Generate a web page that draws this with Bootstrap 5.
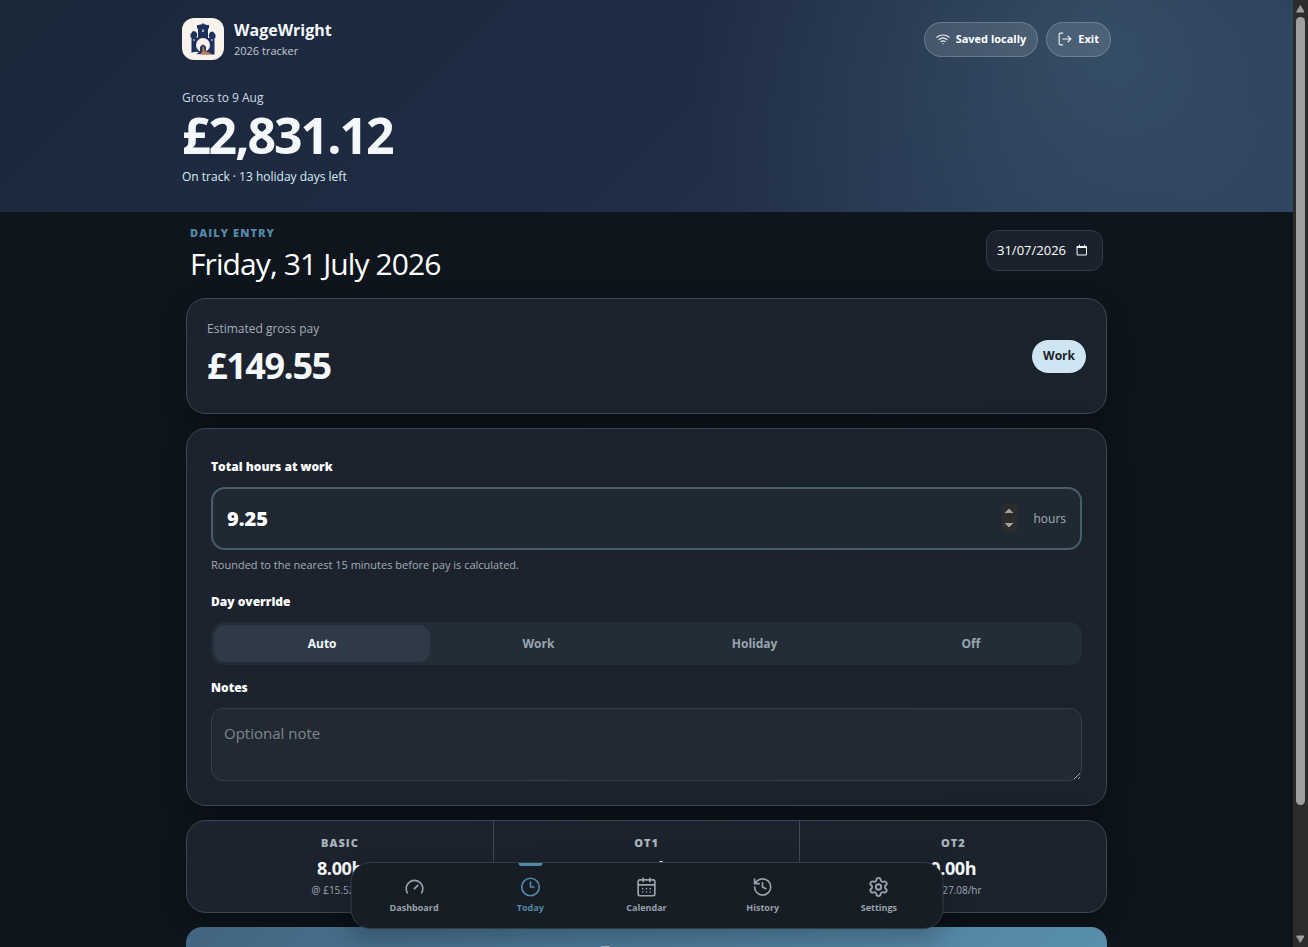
<!DOCTYPE html>
<html lang="en-GB" data-bs-theme="dark">
<head>
<meta charset="utf-8">
<meta name="viewport" content="width=device-width, initial-scale=1">
<title>WageWright</title>
<link href="https://cdn.jsdelivr.net/npm/bootstrap@5.3.0/dist/css/bootstrap.min.css" rel="stylesheet">
<style>
  :root { color-scheme: dark; }
  body { font-family: "Open Sans", "Noto Sans", sans-serif; background: #0e151c; color: #f4f8fb; font-size: 16px; }
  svg { flex: none; fill: none; stroke: currentColor; stroke-width: 2; stroke-linecap: round; stroke-linejoin: round; }
  .hero { background:
      radial-gradient(circle at 85% 20%, rgba(84,130,144,.32), transparent 410px),
      linear-gradient(135deg, #1b283a 0%, #1f2b44 50%, #2b3c5a 100%);
    padding: 18px 0 26px; }
  .hero-inner { max-width: 961px; padding: 0 16px; }
  .brand { gap: 10px; }
  .brand-mark { width: 42px; height: 42px; border-radius: 12px; stroke: none; }
  .brand-name { font-size: 16px; line-height: 24px; font-weight: 700; }
  .brand-sub { font-size: 11px; line-height: 18px; color: #c3cdd8; }
  .pill { border: 1px solid rgba(255,255,255,.2); background: rgba(255,255,255,.12); border-radius: 99px; color: #fff; font-size: 11px; font-weight: 700; line-height: 18px; height: 35px; gap: 6px; padding: 0 11px; }
  .pill svg { opacity: .9; }
  .gross-label { font-size: 12px; line-height: 18px; color: #d0d9e3; margin-top: 29px; }
  .gross-sum { font-size: 50px; line-height: 56px; font-weight: 700; letter-spacing: -.04em; }
  .gross-note { font-size: 12px; line-height: 18px; color: #d8eef5; margin-top: 5px; }
  .sheet { max-width: 921px; padding-top: 12px; }
  .eyebrow { color: #5488a8; font-size: 11px; line-height: 18px; font-weight: 800; letter-spacing: .1em; }
  .day-title { font-size: 30px; line-height: 44px; font-weight: 400; letter-spacing: -.03em; }
  .date-box { width: 117px; height: 41px; background: #1b222d; border: 1px solid #303945; border-radius: 12px; padding: 0 10px; margin-top: 6px; }
  .date-box input { background: none; border: 0; outline: 0; color: #fff; font-size: 13px; width: 76px; padding: 0; }
  .panel { background: linear-gradient(135deg, #1c232e, #1a222c); border: 1px solid #3d4853; border-radius: 20px; box-shadow: 0 8px 28px rgba(0,0,0,.32); margin-bottom: 14px; }
  .pay { padding: 20px; margin-top: 12px; }
  .pay-label { font-size: 12px; line-height: 20px; color: #a4adb7; }
  .pay-sum { font-size: 36px; line-height: 54px; font-weight: 700; letter-spacing: -.04em; }
  .work-tag { background: #cfe5f1; color: #17212b; font-size: 12px; line-height: 18px; font-weight: 700; padding: 7px 11px 8px; border-radius: 99px; }
  .field-label { font-size: 12px; line-height: 28px; font-weight: 800; color: #fff; display: block; margin-bottom: 6px; }
  .hours-box { border: 2px solid #485c69; background: #1f2933; border-radius: 14px; height: 63px; padding: 0 14px; }
  .hours-box input { background: none; border: 0; outline: 0; color: #fff; font-size: 20px; font-weight: 800; min-width: 0; padding: 0; height: 30px; }
  .hours-box input::-webkit-inner-spin-button { opacity: 1; height: 28px; }
  .hours-unit { font-size: 12px; color: #a4adb7; }
  .hint { font-size: 11px; line-height: 18px; color: #a4adb7; margin: 6px 0 14px; }
  .segment { background: #222d38; border-radius: 13px; padding: 3px; margin-bottom: 9px; }
  .segment label { font-size: 12px; line-height: 18px; font-weight: 700; color: #9ba5af; height: 37px; padding: 10px; border: 0; border-radius: 11px; flex: 1 1 0; }
  .segment .btn-check:checked + label { background: #2e3a47; color: #f4f8fb; }
  .notes { background: #212a33; border: 1px solid #343e48; border-radius: 12px; height: 73px; padding: 12px; font-size: 15px; line-height: 24px; color: #fff; resize: vertical; outline: 0; display: block; }
  .notes::placeholder { color: #7e868d; opacity: 1; }
  .rate { padding: 13px 0 16px; }
  .rate + .rate { border-left: 1px solid #3d4853; }
  .rate-name { font-size: 11px; line-height: 18px; font-weight: 800; letter-spacing: .09em; color: #aab3bc; }
  .rate-hours { font-size: 18px; line-height: 32px; font-weight: 700; letter-spacing: -.02em; }
  .rate-pay { font-size: 10px; line-height: 12px; color: #a4adb7; }
  .save { height: 54px; border: 0; border-radius: 16px; background: linear-gradient(135deg, #426580, #4b7897 40%, #5a8fae); color: #fff; font-size: 16px; font-weight: 700; }
  .dock { bottom: 18px; width: 593px; max-width: 96%; left: 50%; transform: translateX(-50%); height: 67px; background: #161d25; border: 1px solid #323c46; border-radius: 20px; padding: 0 5px; box-shadow: 0 10px 28px rgba(0,0,0,.25); }
  .dock a { flex: 1 1 0; color: #9aa2ab; font-size: 9px; line-height: 14px; font-weight: 700; padding-top: 14px; gap: 4px; }
  .dock a.active { color: #5488a8; }
  .dock a.active::before { content: ""; position: absolute; top: 0; width: 24px; height: 3px; background: #5488a8; border-radius: 0 0 3px 3px; }
  .track { width: 15px; flex: none; background: #2c2c2c; padding: 5px 0 4px; }
  .track svg { fill: #9f9f9f; stroke: #9f9f9f; stroke-width: 1; }
  .thumb { width: 9px; height: 84%; background: #9f9f9f; border-radius: 5px; margin-top: 4px; }
</style>
</head>
<body class="d-flex vh-100 overflow-hidden">
<div class="flex-grow-1 position-relative overflow-hidden">
  <header class="hero">
    <div class="hero-inner mx-auto">
      <div class="d-flex justify-content-between align-items-center">
        <div class="brand d-flex align-items-center">
          <svg class="brand-mark" viewBox="0 0 42 42" aria-hidden="true">
            <rect width="42" height="42" fill="#f7f2ec"/>
            <path fill="#1e2f5c" d="M9.500 36V20l-1-1v-3l1-1 1-1.500 1-.5 2 .5 1.500 2v3l-1 1H16V11l-1-1V7h2l1-.5h1.500L21 5l1.500 1.500H24l1 .5h2v3l-1 1v9h2l-1-1v-3l1.500-2 2-.5 1 .5 1 1.500 1 1v3l-1 1v16z"/>
            <circle cx="21" cy="27" r="7" fill="#f7f2ec"/>
            <path fill="#e9edf4" d="M20.300 12q.7-1.500 1.400 0v2h-1.400zM11.500 21h1v2h-1zM29.500 21h1v2h-1z"/>
            <path fill="#27365d" d="M18 36v-7q3-5 6 0v7z"/>
            <path fill="#bd8055" d="M20.500 29q1-1.500 1.500 0l.5 4 6 2v1.500H18l2.500-3z"/>
            <path fill="#f7f2ec" d="M9 35q5-2 8-1l-3 2.500H9z"/>
          </svg>
          <div>
            <div class="brand-name">WageWright</div>
            <div class="brand-sub">2026 tracker</div>
          </div>
        </div>
        <div class="d-flex gap-2">
          <span class="pill d-flex align-items-center">
            <svg width="14" height="14" viewBox="0 0 24 24"><path d="M1.500 9a16 16 0 0 1 21 0M5 13a11 11 0 0 1 14 0M8.500 16.500a6 6 0 0 1 7 0M12 20h.01"/></svg>
            Saved locally</span>
          <button type="button" class="pill d-flex align-items-center">
            <svg width="14" height="14" viewBox="0 0 24 24"><path d="M8 2H4a2 2 0 0 0-2 2v16a2 2 0 0 0 2 2h4M8 12h14M17 7l5 5-5 5"/></svg>
            Exit</button>
        </div>
      </div>
      <div class="gross-label">Gross to 9 Aug</div>
      <div class="gross-sum">£2,831.12</div>
      <div class="gross-note">On track · 13 holiday days left</div>
    </div>
  </header>

  <main class="sheet mx-auto">
    <div class="d-flex justify-content-between align-items-start px-1">
      <div>
        <div class="eyebrow">DAILY ENTRY</div>
        <h1 class="day-title mb-0">Friday, 31 July 2026</h1>
      </div>
      <label class="date-box d-flex align-items-center justify-content-between">
        <input type="text" value="31/07/2026" aria-label="Entry date">
        <svg class="me-1" width="12" height="13" viewBox="0 0 12 13" stroke-width="1"><path style="stroke-width:1" d="M1.500 2.500h9v8.500h-9z"/><path style="stroke-width:1" d="M1.500 2.500h9v1h-9zM3.500 1v1M8.500 1v1"/></svg>
      </label>
    </div>

    <section class="panel pay d-flex justify-content-between align-items-center">
      <div>
        <div class="pay-label">Estimated gross pay</div>
        <div class="pay-sum">£149.55</div>
      </div>
      <span class="work-tag">Work</span>
    </section>

    <section class="panel p-4">
      <label class="field-label" for="hours">Total hours at work</label>
      <div class="hours-box d-flex align-items-center">
        <input id="hours" class="flex-grow-1" type="number" step="0.25" value="9.25">
        <span class="hours-unit ms-3">hours</span>
      </div>
      <div class="hint">Rounded to the nearest 15 minutes before pay is calculated.</div>
      <div class="field-label">Day override</div>
      <div class="segment d-flex" role="group" aria-label="Day override">
        <input class="btn-check" type="radio" name="kind" id="k1" checked><label class="btn" for="k1">Auto</label>
        <input class="btn-check" type="radio" name="kind" id="k2"><label class="btn" for="k2">Work</label>
        <input class="btn-check" type="radio" name="kind" id="k3"><label class="btn" for="k3">Holiday</label>
        <input class="btn-check" type="radio" name="kind" id="k4"><label class="btn" for="k4">Off</label>
      </div>
      <label class="field-label" for="notes">Notes</label>
      <textarea id="notes" class="notes w-100" placeholder="Optional note"></textarea>
    </section>

    <section class="panel d-flex text-center">
      <div class="rate w-100"><div class="rate-name">BASIC</div><div class="rate-hours">8.00h</div><div class="rate-pay">@ £15.52/hr</div></div>
      <div class="rate w-100"><div class="rate-name">OT1</div><div class="rate-hours">0.00h</div><div class="rate-pay">@ £20.31/hr</div></div>
      <div class="rate w-100"><div class="rate-name">OT2</div><div class="rate-hours">0.00h</div><div class="rate-pay">@ £27.08/hr</div></div>
    </section>

    <button type="button" class="save w-100 d-flex align-items-center justify-content-center gap-2">
      <svg width="18" height="18" viewBox="0 0 24 24"><path d="M15 3H5a2 2 0 0 0-2 2v14a2 2 0 0 0 2 2h14a2 2 0 0 0 2-2V8zM7 3v5h8M17 21v-8H7v8"/></svg>
      Save day</button>
  </main>

  <nav class="dock position-absolute d-flex" aria-label="Main">
    <a href="#" class="d-flex flex-column align-items-center text-decoration-none"><svg width="20" height="20" viewBox="0 0 24 24"><path d="m12 14 4-4M3.340 19a10 10 0 1 1 17.320 0"/></svg>Dashboard</a>
    <a href="#" class="active d-flex flex-column align-items-center text-decoration-none"><svg width="20" height="20" viewBox="0 0 24 24"><circle cx="12" cy="12" r="10.500"/><path d="M12 6v6h4"/></svg>Today</a>
    <a href="#" class="d-flex flex-column align-items-center text-decoration-none"><svg width="20" height="20" viewBox="0 0 24 24"><path d="M8 1.500v4M16 1.500v4M2 9.500h20M7.500 14h.01M12 14h.01M16.500 14h.01M7.500 18h.01M12 18h.01M16.500 18h.01"/><rect x="2" y="3.500" width="20" height="19" rx="2"/></svg>Calendar</a>
    <a href="#" class="d-flex flex-column align-items-center text-decoration-none"><svg width="20" height="20" viewBox="0 0 24 24"><path d="M2.500 12A9.700 9.700 0 1 0 12 2.300a10 10 0 0 0-7 3L2.500 8M2.500 2.500V8H8M12 7v5l4 2"/></svg>History</a>
    <a href="#" class="d-flex flex-column align-items-center text-decoration-none"><svg width="22" height="20" viewBox="1 1 22 22"><path d="M9.670 4.140a2.340 2.340 0 0 1 4.660 0 2.340 2.340 0 0 0 3.320 1.910 2.340 2.340 0 0 1 2.330 4.040 2.340 2.340 0 0 0 0 3.830 2.340 2.340 0 0 1-2.330 4.030 2.340 2.340 0 0 0-3.320 1.920 2.340 2.340 0 0 1-4.660 0 2.340 2.340 0 0 0-3.320-1.920 2.340 2.340 0 0 1-2.330-4.030 2.340 2.340 0 0 0 0-3.830 2.340 2.340 0 0 1 2.330-4.040 2.340 2.340 0 0 0 3.320-1.910"/><circle cx="12" cy="12" r="3"/></svg>Settings</a>
  </nav>
</div>
<div class="track d-flex flex-column align-items-center" aria-hidden="true">
  <svg width="9" height="8" viewBox="0 0 9 8"><path d="M4.500 1 8 7H1z"/></svg>
  <div class="thumb"></div>
  <svg class="mt-auto" width="9" height="8" viewBox="0 0 9 8"><path d="M4.500 7 8 1H1z"/></svg>
</div>
<script src="https://cdn.jsdelivr.net/npm/bootstrap@5.3.0/dist/js/bootstrap.bundle.min.js"></script>
</body>
</html>
